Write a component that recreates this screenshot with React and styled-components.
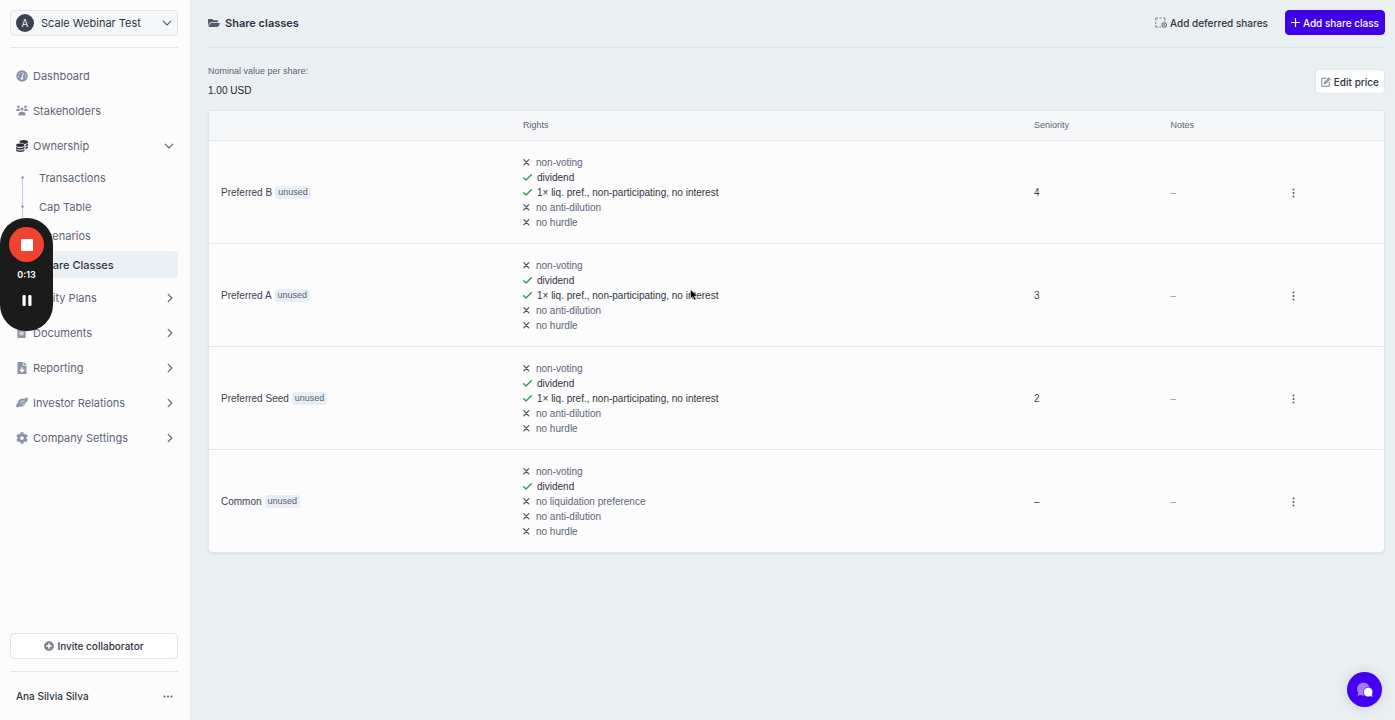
import React from 'react';
import styled, { createGlobalStyle, css, ThemeProvider } from 'styled-components';
import { FaFolderOpen, FaCog, FaPlusCircle, FaFileDownload, FaFileAlt } from 'react-icons/fa';

const theme = {
  font: '"Inter", "Liberation Sans", sans-serif',
  dataFont: '"Liberation Sans", Arial, sans-serif',
  primary: '#3f00e7',
  page: '#eaeff2',
  panel: '#fcfcfd',
  line: '#e1e5ea',
  ink: '#2f3440',
  text: '#5d6475',
  muted: '#8b93a8',
};

const GlobalStyle = createGlobalStyle`
  * { box-sizing: border-box; }
  body {
    margin: 0;
    font-family: ${theme.font};
    font-size: 10px;
    color: ${theme.ink};
    background: ${theme.page};
  }
  button { font-family: inherit; cursor: pointer; }
  svg { display: block; flex-shrink: 0; }
`;

const Layout = styled.div`
  display: grid;
  grid-template-columns: 190px minmax(0, 1fr);
  min-height: 100vh;
`;

/* ---------- sidebar ---------- */

const Sidebar = styled.aside`
  display: flex;
  flex-direction: column;
  padding: 10px 12px 0 10px;
  background: ${props => props.theme.panel};
`;

const AccountButton = styled.button`
  display: flex;
  align-items: center;
  gap: 7px;
  height: 26px;
  padding: 0 5px;
  border: 1px solid ${props => props.theme.line};
  border-radius: 4px;
  background: #f4f7fa;
  color: ${props => props.theme.ink};
  font-size: 11px;
  text-align: left;
`;

const Avatar = styled.span`
  display: flex;
  align-items: center;
  justify-content: center;
  width: 18px;
  height: 18px;
  border-radius: 50%;
  background: #3a4152;
  color: #e6eaf1;
  font-size: 10px;
`;

const Grow = styled.span`
  flex: 1;
`;

const Rule = styled.hr`
  width: 100%;
  margin: ${props => props.$top || 0}px 0 0;
  border: 0;
  border-top: 1px solid ${props => props.theme.line};
`;

const Nav = styled.nav`
  margin-top: 10px;
`;

const navRow = css`
  display: flex;
  align-items: center;
  gap: 6px;
  width: 100%;
  height: 35px;
  padding: 0 4px 0 6px;
  border: 0;
  background: none;
  color: ${props => props.theme.text};
  font-size: 11px;
  text-align: left;
  text-decoration: none;
`;

const NavLink = styled.a`${navRow}`;
const NavButton = styled.button`${navRow}`;

const NavIcon = styled.span`
  display: flex;
  justify-content: center;
  width: 11px;
  color: ${props => props.theme.muted};
`;

const SubNav = styled.ul`
  margin: 0;
  padding: 0 0 1px;
  list-style: none;
`;

const SubItem = styled.li`
  display: flex;
  height: 29px;
`;

/* rail with one dot per page */
const Rail = styled.span`
  display: flex;
  align-items: center;
  justify-content: center;
  width: 24px;
  background: linear-gradient(#c9c3ee, #c9c3ee) center ${props => (props.$first ? 'bottom' : 'top')} / 1px ${props => (props.$end ? '50%' : '100%')} no-repeat;
  &::after {
    content: '';
    width: 3px;
    height: 3px;
    border-radius: 50%;
    background: #a9a0dc;
  }
`;

const SubLink = styled.a`
  display: flex;
  flex: 1;
  align-items: center;
  margin: 1px 0;
  padding-left: 5px;
  border-radius: 4px;
  background: ${props => (props.$active ? '#ebf0f4' : 'none')};
  color: ${props => (props.$active ? props.theme.ink : props.theme.text)};
  font-size: 11px;
  font-weight: ${props => (props.$active ? 500 : 400)};
  text-decoration: none;
`;

const Bottom = styled.div`
  display: flex;
  flex-direction: column;
  margin-top: auto;
`;

const InviteButton = styled.button`
  display: flex;
  align-items: center;
  justify-content: center;
  gap: 3px;
  height: 26px;
  border: 1px solid ${props => props.theme.line};
  border-radius: 4px;
  background: #fdfdfe;
  color: ${props => props.theme.ink};
  font-size: 10px;
  font-weight: 500;
  svg { color: #7d828c; }
`;

const UserRow = styled.div`
  display: flex;
  align-items: center;
  justify-content: space-between;
  height: 48px;
  padding: 0 5px 0 6px;
  font-weight: 500;
`;

const IconButton = styled.button`
  display: inline-flex;
  padding: 0;
  border: 0;
  background: none;
  color: #555b69;
  vertical-align: middle;
`;

/* ---------- main ---------- */

const Main = styled.main`
  padding: 0 10px 0 18px;
`;

const TopBar = styled.header`
  display: flex;
  align-items: center;
  gap: 5px;
  height: 48px;
  padding-bottom: 2px;
  border-bottom: 1px solid #dde3e8;
`;

const PageTitle = styled.h1`
  flex: 1;
  margin: 0;
  font-size: 11px;
  font-weight: 600;
`;

const Button = styled.button`
  display: flex;
  align-items: center;
  gap: 3px;
  height: 25px;
  padding: 0 5px;
  border: 1px solid ${props => (props.$plain ? 'transparent' : props.$primary ? props.theme.primary : '#e4e7eb')};
  border-radius: 4px;
  background: ${props => (props.$plain ? 'none' : props.$primary ? props.theme.primary : '#fdfdfe')};
  color: ${props => (props.$primary ? '#fff' : props.theme.ink)};
  font-size: 10px;
  font-weight: 500;
`;

const Actions = styled.div`
  display: flex;
  align-items: center;
  gap: 11px;
`;

const Summary = styled.section`
  display: flex;
  align-items: center;
  justify-content: space-between;
  padding: 14px 0 9px;
`;

const Pair = styled.dl`
  margin: 0;
  font-family: ${props => props.theme.dataFont};
`;

const Label = styled.dt`
  color: ${props => props.theme.text};
  font-size: 9px;
  line-height: 18px;
`;

const Value = styled.dd`
  margin: 0;
  color: #1f232c;
  line-height: 21px;
`;

const Card = styled.div`
  overflow: hidden;
  border: 1px solid #e1e6eb;
  border-radius: 5px;
  background: ${props => props.theme.panel};
  box-shadow: 0 1px 2px rgba(60, 70, 90, 0.12);
`;

const Table = styled.table`
  width: 100%;
  border-collapse: collapse;
  font-family: ${props => props.theme.dataFont};
  table-layout: fixed;
`;

const Th = styled.th`
  width: ${props => props.$width};
  height: 29px;
  padding: 0 12px;
  border-bottom: 1px solid #e3e6ea;
  background: #f5f7f9;
  color: ${props => props.theme.text};
  font-size: 9px;
  font-weight: 400;
  text-align: left;
`;

const Td = styled.td`
  padding: 14px 12px 13px;
  color: ${props => (props.$muted ? '#8f95a3' : '#3c424f')};
  vertical-align: middle;
  tr:not(:last-child) > & { border-bottom: 1px solid #e3e6ea; }
`;

const NameCell = styled.div`
  display: flex;
  align-items: center;
  gap: 3px;
`;

const Tag = styled.span`
  padding: 0 3px;
  border-radius: 3px;
  background: #e9eef4;
  color: #586478;
  font-size: 9px;
  line-height: 13px;
`;

const RightsList = styled.ul`
  margin: 0;
  padding: 0;
  list-style: none;
`;

const Right = styled.li`
  display: flex;
  align-items: center;
  gap: ${props => (props.$on ? 5 : 6)}px;
  line-height: 15px;
  color: ${props => (props.$on ? props.theme.ink : props.theme.text)};
`;

/* ---------- floating parts ---------- */

const Recorder = styled.div`
  position: fixed;
  top: 218px;
  left: 0;
  display: flex;
  flex-direction: column;
  align-items: center;
  width: 53px;
  height: 113px;
  padding-top: 9px;
  border-radius: 26px;
  background: #1c1b1c;
  color: #fff;
`;

const StopButton = styled.button`
  display: flex;
  align-items: center;
  justify-content: center;
  width: 35px;
  height: 35px;
  padding: 0;
  border: 0;
  border-radius: 50%;
  background: #f0432f;
  &::after {
    content: '';
    width: 12px;
    height: 12px;
    border-radius: 1px;
    background: #fff;
  }
`;

const Timer = styled.time`
  margin: 6px 0 13px;
  font-size: 9px;
  font-weight: 600;
  line-height: 14px;
`;

const ChatButton = styled.button`
  position: fixed;
  right: 13px;
  bottom: 13px;
  display: flex;
  align-items: center;
  justify-content: center;
  width: 35px;
  height: 35px;
  padding: 0;
  border: 0;
  border-radius: 50%;
  background: #4400f0;
  box-shadow: 0 1px 12px rgba(50, 60, 80, 0.18);
`;

const Pointer = styled.svg`
  position: fixed;
  top: 289px;
  left: 690px;
  pointer-events: none;
`;

const Chevron = ({ down }) => (
  <svg width="10" height="10" viewBox="0 0 10 10" fill="none" stroke="#5a606d" strokeWidth="1.1" strokeLinecap="round" strokeLinejoin="round">
    <path d={down ? 'M1.200 3.200 5 7l3.800-3.800' : 'M4.200 1.400 7.800 5l-3.600 3.600'} />
  </svg>
);

const Gauge = () => (
  <svg width="12" height="12" viewBox="0 0 24 24">
    <circle cx="12" cy="12" r="11.500" fill="currentColor" />
    <g fill="none" stroke="#f3f5f9" strokeLinecap="round">
      <path d="M12 16.500 14.500 7" strokeWidth="2" />
      <path d="M5 13h.1M7 7.500h.1M12 4.500h.1M18.500 9.500h.1M19 14h.1" strokeWidth="2.400" />
    </g>
    <circle cx="11.800" cy="17" r="2.600" fill="#f3f5f9" />
  </svg>
);

const Stakeholders = () => (
  <svg width="12" height="11" viewBox="0 0 24 22" fill="currentColor">
    <circle cx="5" cy="3.600" r="2.600" />
    <circle cx="19" cy="3.600" r="2.600" />
    <circle cx="12" cy="8" r="3" />
    <path d="M0 12c0-3 2-4.600 4.600-4.600 1 0 1.900.2 2.600.7-.2 1.600.2 3 1.400 3.900H0zM24 12c0-3-2-4.600-4.600-4.600-1 0-1.900.2-2.600.7.2 1.600-.2 3-1.400 3.900H24zM5 19c0-3.600 2-5.600 5-5.600h4c3 0 5 2 5 5.600v2H5z" />
  </svg>
);

/* two stacks, the back one shifted up and right */
const Coins = () => (
  <svg width="12" height="12" viewBox="0 0 24 24" fill="#2b303b">
    <ellipse cx="15.500" cy="4" rx="8.500" ry="3.800" />
    <path d="M19 9.500c2.200-.4 4-1.200 5-2.400v3c0 1.200-2 2.400-5 3zM19 14.700c2.200-.4 4-1.200 5-2.400v2.800c0 1.200-2 2.400-5 3z" />
    <ellipse cx="8.500" cy="10.500" rx="9" ry="4.200" stroke="#fcfcfd" strokeWidth="1.200" />
    <path d="M0 13.400c1.600 1.700 5 2.600 8.500 2.600s6.900-.9 8.500-2.600v2.600c0 1.800-3.800 3.200-8.500 3.200S0 17.800 0 16zM0 18.400c1.600 1.700 5 2.600 8.500 2.600s6.900-.9 8.500-2.600v2.200c0 1.900-3.800 3.400-8.500 3.400S0 22.500 0 20.600z" />
  </svg>
);

const Relations = () => (
  <svg width="12" height="11" viewBox="0 0 24 22" fill="currentColor">
    <path d="M5 7 9.500 3.500H17L21 1l3 1.500-1.500 6-3 3-2 4.500-5 3H8L4 21l-4-1.500 1-5 2.500-2z" />
    <path d="M8.500 13 10.500 8.500h7M12 14.500h3.500l2-3" fill="none" stroke="#fcfcfd" strokeWidth="1.400" />
  </svg>
);

const DeferredIcon = () => (
  <svg width="12" height="11" viewBox="0 0 24 22" fill="none" stroke="#6d7380" strokeWidth="1.800">
    <path d="M1.500 7V2H6M9 2h4M16 2h4v5M1.500 10v4M1.500 16.500V20H6M8.500 20H12M20 8.500V10" />
    <circle cx="18.500" cy="16" r="4.500" strokeWidth="2.200" />
    <path d="M18.500 13.800v4.400M16.300 16h4.400" strokeWidth="1.400" />
  </svg>
);

const EditIcon = () => (
  <svg width="10" height="10" viewBox="0 0 20 20" fill="none" stroke="#777c87" strokeWidth="1.900">
    <path d="M11 2.500H1.500V18.500h15V10" />
    <path d="M6 14l1-4.200L15.500 1.500l3 3L10 13z" fill="#9b9fa8" strokeWidth="1.300" />
  </svg>
);

const PlusIcon = () => (
  <svg width="9" height="9" viewBox="0 0 9 9" stroke="#fff" strokeWidth="1.200" strokeLinecap="round">
    <path d="M4.500.5v8M.5 4.500h8" />
  </svg>
);

const Dots = ({ vertical }) => (
  <svg width={vertical ? 7 : 10} height={vertical ? 10 : 7} viewBox={vertical ? '0 0 7 10' : '0 0 10 7'} fill="currentColor">
    {[1.5, 5, 8.5].map(p => (
      <circle key={p} cx={vertical ? 3.5 : p} cy={vertical ? p : 3.5} r="1" />
    ))}
  </svg>
);

const Mark = ({ on }) => (on ? (
  <svg width="9" height="9" viewBox="0 0 9 9" fill="none" stroke="#2f9a4e" strokeWidth="1.400" strokeLinecap="round" strokeLinejoin="round">
    <path d="M.7 4.700 3 6.900 8.300 1.800" />
  </svg>
) : (
  <svg width="7" height="9" viewBox="0 0 7 9" fill="none" stroke="#4d5361" strokeWidth="1.200" strokeLinecap="round">
    <path d="M.8 1.700 5.800 6.900M5.800 1.700.8 6.900" />
  </svg>
));

const sections = [
  { name: 'Equity Plans', icon: <FaFileAlt size={11} /> },
  { name: 'Documents', icon: <FaFileAlt size={11} /> },
  { name: 'Reporting', icon: <FaFileDownload size={12} /> },
  { name: 'Investor Relations', icon: <Relations /> },
  { name: 'Company Settings', icon: <FaCog size={12} /> },
];

const pages = ['Transactions', 'Cap Table', 'Scenarios', 'Share Classes'];

const rights = liquidation => [
  { text: 'non-voting' },
  { text: 'dividend', on: true },
  liquidation
    ? { text: '1× liq. pref., non-participating, no interest', on: true }
    : { text: 'no liquidation preference' },
  { text: 'no anti-dilution' },
  { text: 'no hurdle' },
];

const shareClasses = [
  { name: 'Preferred B', rights: rights(true), seniority: '4' },
  { name: 'Preferred A', rights: rights(true), seniority: '3' },
  { name: 'Preferred Seed', rights: rights(true), seniority: '2' },
  { name: 'Common', rights: rights(false), seniority: '–' },
];

const SideMenu = () => (
  <Sidebar>
    <AccountButton type="button" aria-haspopup="listbox">
      <Avatar>A</Avatar>
      <Grow>Scale Webinar Test</Grow>
      <Chevron down />
    </AccountButton>
    <Rule $top={11} />
    <Nav>
      <NavLink href="#dashboard"><NavIcon><Gauge /></NavIcon>Dashboard</NavLink>
      <NavLink href="#stakeholders"><NavIcon><Stakeholders /></NavIcon>Stakeholders</NavLink>
      <NavButton type="button" aria-expanded="true">
        <NavIcon><Coins /></NavIcon><Grow>Ownership</Grow><Chevron down />
      </NavButton>
      <SubNav>
        {pages.map((page, i) => (
          <SubItem key={page}>
            <Rail $first={i === 0} $end={i === 0 || i === pages.length - 1} />
            <SubLink href={`#${page}`} $active={page === 'Share Classes'}>{page}</SubLink>
          </SubItem>
        ))}
      </SubNav>
      {sections.map(({ name, icon }) => (
        <NavButton key={name} type="button" aria-expanded="false">
          <NavIcon>{icon}</NavIcon><Grow>{name}</Grow><Chevron />
        </NavButton>
      ))}
    </Nav>
    <Bottom>
      <InviteButton type="button"><FaPlusCircle size={10} />Invite collaborator</InviteButton>
      <Rule $top={12} />
      <UserRow>
        Ana Silvia Silva
        <IconButton type="button" aria-label="Account menu"><Dots /></IconButton>
      </UserRow>
    </Bottom>
  </Sidebar>
);

const ClassRow = ({ item }) => (
  <tr>
    <Td><NameCell>{item.name}<Tag>unused</Tag></NameCell></Td>
    <Td>
      <RightsList>
        {item.rights.map(({ text, on }) => (
          <Right key={text} $on={on}><Mark on={on} />{text}</Right>
        ))}
      </RightsList>
    </Td>
    <Td>{item.seniority}</Td>
    <Td $muted>–</Td>
    <Td>
      <IconButton type="button" aria-label={`${item.name} options`}><Dots vertical /></IconButton>
    </Td>
  </tr>
);

export default function App() {
  return (
    <ThemeProvider theme={theme}>
      <GlobalStyle />
      <Layout>
        <SideMenu />
        <Main>
          <TopBar>
            <FaFolderOpen size={12} color="#555b69" />
            <PageTitle>Share classes</PageTitle>
            <Actions>
              <Button type="button" $plain><DeferredIcon />Add deferred shares</Button>
              <Button type="button" $primary><PlusIcon />Add share class</Button>
            </Actions>
          </TopBar>
          <Summary>
            <Pair>
              <Label>Nominal value per share:</Label>
              <Value>1.00 USD</Value>
            </Pair>
            <Button type="button"><EditIcon />Edit price</Button>
          </Summary>
          <Card>
            <Table>
              <thead>
                <tr>
                  <Th $width="25.7%" aria-label="Name" />
                  <Th $width="43.5%">Rights</Th>
                  <Th $width="11.6%">Seniority</Th>
                  <Th $width="10.2%">Notes</Th>
                  <Th $width="9%" aria-label="Options" />
                </tr>
              </thead>
              <tbody>
                {shareClasses.map(item => <ClassRow key={item.name} item={item} />)}
              </tbody>
            </Table>
          </Card>
        </Main>
      </Layout>
      <Recorder>
        <StopButton type="button" aria-label="Stop" />
        <Timer>0:13</Timer>
        <IconButton type="button" aria-label="Pause">
          <svg width="10" height="11" viewBox="0 0 10 11" fill="#fff">
            <rect x="0.500" y="0" width="3.200" height="11" rx="1.200" />
            <rect x="6.300" y="0" width="3.200" height="11" rx="1.200" />
          </svg>
        </IconButton>
      </Recorder>
      <Pointer width="9" height="12" viewBox="0 0 9 12">
        <path d="M.5.5v9l2.200-1.900 1.500 3.500 1.700-.7-1.500-3.400h3z" fill="#000" stroke="#fff" strokeWidth=".5" />
      </Pointer>
      <ChatButton type="button" aria-label="Chat">
        <svg width="18" height="16" viewBox="0 0 18 16">
          <path d="M7.500.5a6.500 6.500 0 1 1-2.800 12.400L1.500 13.800l.8-3A6.500 6.500 0 0 1 7.500.5z" fill="#a67cf7" />
          <path d="M12 5.200a4.900 4.900 0 0 1 4.300 7.200l.6 2.700-2.700-.5A4.900 4.900 0 1 1 12 5.200z" fill="#fff" stroke="#4400f0" strokeWidth=".7" />
        </svg>
      </ChatButton>
    </ThemeProvider>
  );
}
